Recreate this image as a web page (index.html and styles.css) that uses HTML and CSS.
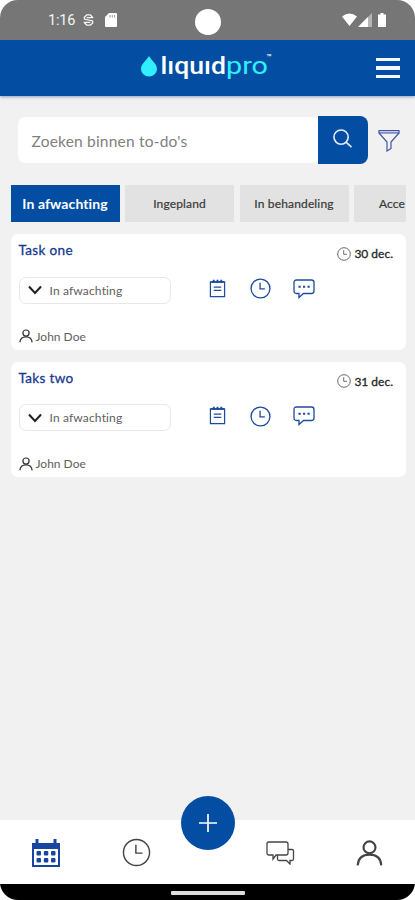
FILE: index.html
```html
<!DOCTYPE html>
<html lang="nl">
<head>
<meta charset="utf-8">
<title>Liquidpro</title>
<link rel="stylesheet" href="styles.css">
</head>
<body>
<svg class="defs" aria-hidden="true">
  <symbol id="clock" viewBox="0 0 24 24"><circle cx="12" cy="12" r="10.8"/><path d="M11.5 5.5v7h5.5"/></symbol>
  <symbol id="person" viewBox="0 0 24 24"><circle cx="12" cy="7" r="5.3"/><path d="M1.5 23c.5-7 4.500-9.500 10.500-9.500s10 2.500 10.500 9.500"/></symbol>
  <symbol id="note" viewBox="0 0 18 20"><path d="M1.500 3h15v15.500h-15z"/><path class="thick" d="M2 3h14M5 .8v3.500M9 .8v3.500M13 .8v3.500"/><path d="M5 8.500h8M5 12h8"/></symbol>
  <symbol id="chat" viewBox="0 0 22 20"><path d="M3.500 1h15q2.500 0 2.500 2.500v8.500q0 2.500-2.500 2.500h-8l-4.500 4v-4H3.500Q1 14.500 1 12V3.500Q1 1 3.500 1z"/><path class="thick" d="M5.500 7.800h2.200M10 7.800h2.200M14.500 7.800h2.200"/></symbol>
</svg>
<div class="phone">
  <div class="status">
    <span class="time">1:16</span>
    <svg class="debug" viewBox="0 0 12 14"><path d="M10.500 5V4L8 1.500H4L1.500 4v2l9 2v2.500L8 12.500H4L1.500 10V9M4 4.500h6.500M1.500 9.500H8"/></svg>
    <svg class="sd" viewBox="0 0 12 14"><path d="M4 0h7q1 0 1 1v12q0 1-1 1H1q-1 0-1-1V4z"/><path class="slots" d="M5 2v2.500M7.300 2v2.500M9.600 2v2.500"/></svg>
    <span class="camera"></span>
    <svg class="signals" viewBox="0 0 46 14"><path d="M0 3.500q7.500-6 15 0L7.500 13z"/><path class="dim" d="M30 0v14H16z"/><path d="M26 4v10H16z"/><path d="M38.500 0h3v1.500H44V14h-8V1.500h2.500z"/></svg>
  </div>
  <header class="header">
    <svg class="logo" viewBox="0 0 136 30">
      <path class="drop" d="M9 3C6 8 1 11 1 16a8 7.500 0 0 0 16 0c0-5-5-8-8-13z"/>
      <text x="20.500" y="21" textLength="65.500" lengthAdjust="spacingAndGlyphs">lıquıd</text>
      <text class="pro" x="86" y="21" textLength="42" lengthAdjust="spacingAndGlyphs">pro</text>
      <text class="tm" x="126.500" y="7">™</text>
    </svg>
    <div class="menu"><i></i><i></i><i></i></div>
  </header>
  <main class="main">
    <div class="searchrow">
      <div class="search">Zoeken binnen to-do's</div>
      <div class="go"><svg viewBox="0 0 20 20"><circle cx="8.500" cy="8.500" r="7.500"/><path d="M14 14l5.500 5"/></svg></div>
      <svg class="filter" viewBox="0 0 22 23"><path class="rim" d="M1 1.500h20v2.500H1z"/><path d="M1 4l8 9v9l4-2.500V13l8-9"/></svg>
    </div>
    <div class="tabs">
      <div class="tab active">In afwachting</div><div class="tab">Ingepland</div><div class="tab">In behandeling</div><div class="tab next">Acce</div>
    </div>
    <section class="card">
      <div class="top"><h2>Task one</h2><div class="date"><svg><use href="#clock"/></svg>30 dec.</div></div>
      <div class="actions">
        <div class="select"><svg viewBox="0 0 14 10"><path d="M1 1.500l6 6.500 6-6.500"/></svg>In afwachting</div>
        <svg class="note"><use href="#note"/></svg><svg class="clock"><use href="#clock"/></svg><svg class="chat"><use href="#chat"/></svg>
      </div>
      <div class="owner"><svg><use href="#person"/></svg>John Doe</div>
    </section>
    <section class="card">
      <div class="top"><h2>Taks two</h2><div class="date"><svg><use href="#clock"/></svg>31 dec.</div></div>
      <div class="actions">
        <div class="select"><svg viewBox="0 0 14 10"><path d="M1 1.500l6 6.500 6-6.500"/></svg>In afwachting</div>
        <svg class="note"><use href="#note"/></svg><svg class="clock"><use href="#clock"/></svg><svg class="chat"><use href="#chat"/></svg>
      </div>
      <div class="owner"><svg><use href="#person"/></svg>John Doe</div>
    </section>
  </main>
  <nav class="nav">
    <svg class="calendar" viewBox="0 0 28 28"><path class="fill" d="M0 4h3.500V0h3v4h15V0h3v4H28v24H0z"/><path class="paper" d="M2 10h24v16H2z"/><g class="fill"><rect x="4.500" y="12" width="4.500" height="4.500" rx="1"/><rect x="11.800" y="12" width="4.500" height="4.500" rx="1"/><rect x="19" y="12" width="4.500" height="4.500" rx="1"/><rect x="4.500" y="19" width="4.500" height="4.500" rx="1"/><rect x="11.800" y="19" width="4.500" height="4.500" rx="1"/><rect x="19" y="19" width="4.500" height="4.500" rx="1"/></g></svg>
    <svg class="navclock"><use href="#clock"/></svg>
    <div class="add"><svg viewBox="0 0 18 18"><path d="M9 0v18M0 9h18"/></svg></div>
    <svg class="chats" viewBox="0 0 29 24"><path d="M2.500 1h17.500q2 0 2 2v9q0 2-2 2H10l-3 4v-4H3q-2 0-2-2V3q0-2 1.500-2z"/><path d="M22 8.500h4q1.500 0 1.500 1.500v8q0 1.500-1.500 1.500h-2v3.500l-3.500-3.500H13q-1.500 0-1.500-1.500v-4"/></svg>
    <svg class="profile"><use href="#person"/></svg>
  </nav>
  <div class="system"><span></span></div>
</div>
</body>
</html>
```

FILE: styles.css
```css
* { box-sizing: border-box; }
body { margin: 0; background: #fff; font-family: Lato, "Liberation Sans", sans-serif; }
svg { display: block; flex: none; fill: none; stroke: currentColor; }
.defs { position: absolute; width: 0; height: 0; }
.phone { width: 415px; height: 900px; display: flex; flex-direction: column; overflow: hidden; border-radius: 18px; background: #f1f1f1; }
.status { position: relative; height: 40px; flex: none; display: flex; align-items: center; background: #767676; color: #f4f4f4; padding: 1px 27px 0 48px; }
.time { width: 35px; font: 14.5px Roboto, sans-serif; letter-spacing: -.2px; }
.debug { width: 11px; height: 14px; margin-top: -2px; stroke-width: 1.4; }
.sd { width: 12px; height: 14px; margin: -2px 0 0 11px; fill: #fff; stroke: none; }
.sd .slots { stroke: #999; stroke-width: 1; }
.camera { position: absolute; left: 195px; top: 9px; width: 26px; height: 26px; border-radius: 50%; background: #fff; }
.signals { width: 46px; height: 14px; margin: -2px 0 0 auto; fill: #fff; stroke: none; }
.signals .dim { fill: #b5b5b5; }
.header { height: 56px; flex: none; display: flex; align-items: flex-start; background: #034ea2; padding: 13px 15px 0 140px; box-shadow: 0 1px 3px #8f9fc1; }
.logo { width: 136px; height: 30px; overflow: visible; stroke: none; fill: #fff; font: 500 24.500px Roboto, sans-serif; }
.logo .drop, .logo .pro { fill: #30efff; }
.logo .pro { font-weight: 400; }
.logo .tm { font-size: 8px; }
.menu { margin: 5px 0 0 auto; width: 24px; display: grid; gap: 5px; }
.menu i { height: 3.3px; background: #f5f7ff; }
.main { flex: 1; padding: 20px 9.500px 0 10.500px; min-height: 0; }
.searchrow { display: flex; align-items: center; height: 48px; padding-left: 7px; }
.search { width: 300px; height: 46px; border-radius: 7px 0 0 7px; background: #fff; padding: 0 14px; line-height: 48px; font-size: 15.500px; letter-spacing: .2px; color: #808080; }
.go { width: 50px; height: 48px; border-radius: 0 8px 8px 0; background: #034ea2; display: flex; justify-content: center; padding-top: 13px; color: #e7eeff; }
.go svg { width: 19px; height: 19px; stroke-width: 1.7; }
.filter { width: 22px; height: 23px; margin-left: 10px; color: #4055a4; stroke-width: 1.2; }
.filter .rim { fill: #c5caec; }
.tabs { display: flex; gap: 5.500px; height: 37px; margin-top: 21px; overflow: hidden; }
.tab { flex: 0 0 109px; height: 36.500px; background: #e2e2e2; color: #383838; text-align: center; line-height: 37px; font-size: 12px; -webkit-text-stroke: .2px; letter-spacing: .15px; }
.tab.active { background: #034ea2; color: #fff; font-weight: 700; font-size: 14px; letter-spacing: .1px; -webkit-text-stroke: 0; }
.tab.next { flex: 1; padding-left: 25px; text-align: left; letter-spacing: .1px; }
.card { height: 115.500px; margin-top: 12px; border-radius: 7px; background: #fff; padding: 8px 12px 0 8px; }
.top { display: flex; justify-content: space-between; height: 34px; }
h2 { margin: 0; color: #173a91; font-size: 13.500px; line-height: 17px; font-weight: 400; -webkit-text-stroke: .3px; letter-spacing: .35px; }
.date { display: flex; align-items: center; height: 23px; margin-right: .5px; gap: 3px; font-size: 12px; color: #252525; -webkit-text-stroke: .3px; }
.date svg { width: 14px; height: 14px; stroke-width: 1.5; color: #555; }
.actions { display: flex; align-items: center; height: 28px; color: #1d4b9e; }
.select { display: flex; align-items: center; width: 152px; height: 27px; border: 1px solid #e8e8e8; border-radius: 7px; padding-left: 8.500px; font-size: 12px; letter-spacing: .15px; color: #606060; }
.select svg { width: 14px; height: 10px; color: #222; stroke-width: 2; margin-right: 7.500px; }
.note { width: 17px; height: 19px; margin: -4px 0 0 38.500px; stroke-width: 1.3; }
.thick { stroke-width: 2; }
.clock { width: 21px; height: 21px; margin: -3px 0 0 23.500px; stroke-width: 1.5; }
.chat { width: 22px; height: 20px; margin: -3px 0 0 22.500px; stroke-width: 1.3; }
.owner { display: flex; align-items: center; gap: 3px; height: 18px; margin-top: 23px; font-size: 12px; color: #606060; }
.owner svg { width: 14px; height: 14px; stroke-width: 2.1; color: #333; }
.nav { height: 64px; flex: none; display: flex; align-items: center; background: #fff; padding: 1px 30px 0 32px; color: #444; }
.calendar { width: 28px; height: 28px; stroke: none; }
.calendar .fill { fill: #1646a0; }
.calendar .paper { fill: #fff; }
.navclock { width: 29px; height: 29px; margin-left: 61.500px; stroke-width: 1.2; }
.add { width: 54px; height: 54px; flex: none; display: flex; align-items: center; justify-content: center; margin: -60px 0 0 30.500px; border-radius: 50%; background: #034ea2; color: #fff; }
.add svg { width: 18px; height: 18px; stroke-width: 1.7; }
.chats { width: 29px; height: 24px; margin-left: 31px; stroke-width: 1.3; }
.profile { width: 27px; height: 28px; margin-left: 61px; stroke-width: 1.9; }
.system { height: 16px; flex: none; background: #000; display: flex; justify-content: center; align-items: center; padding-top: 2px; }
.system span { width: 74px; height: 3.500px; background: #ddd; border-radius: 1px; }
```
